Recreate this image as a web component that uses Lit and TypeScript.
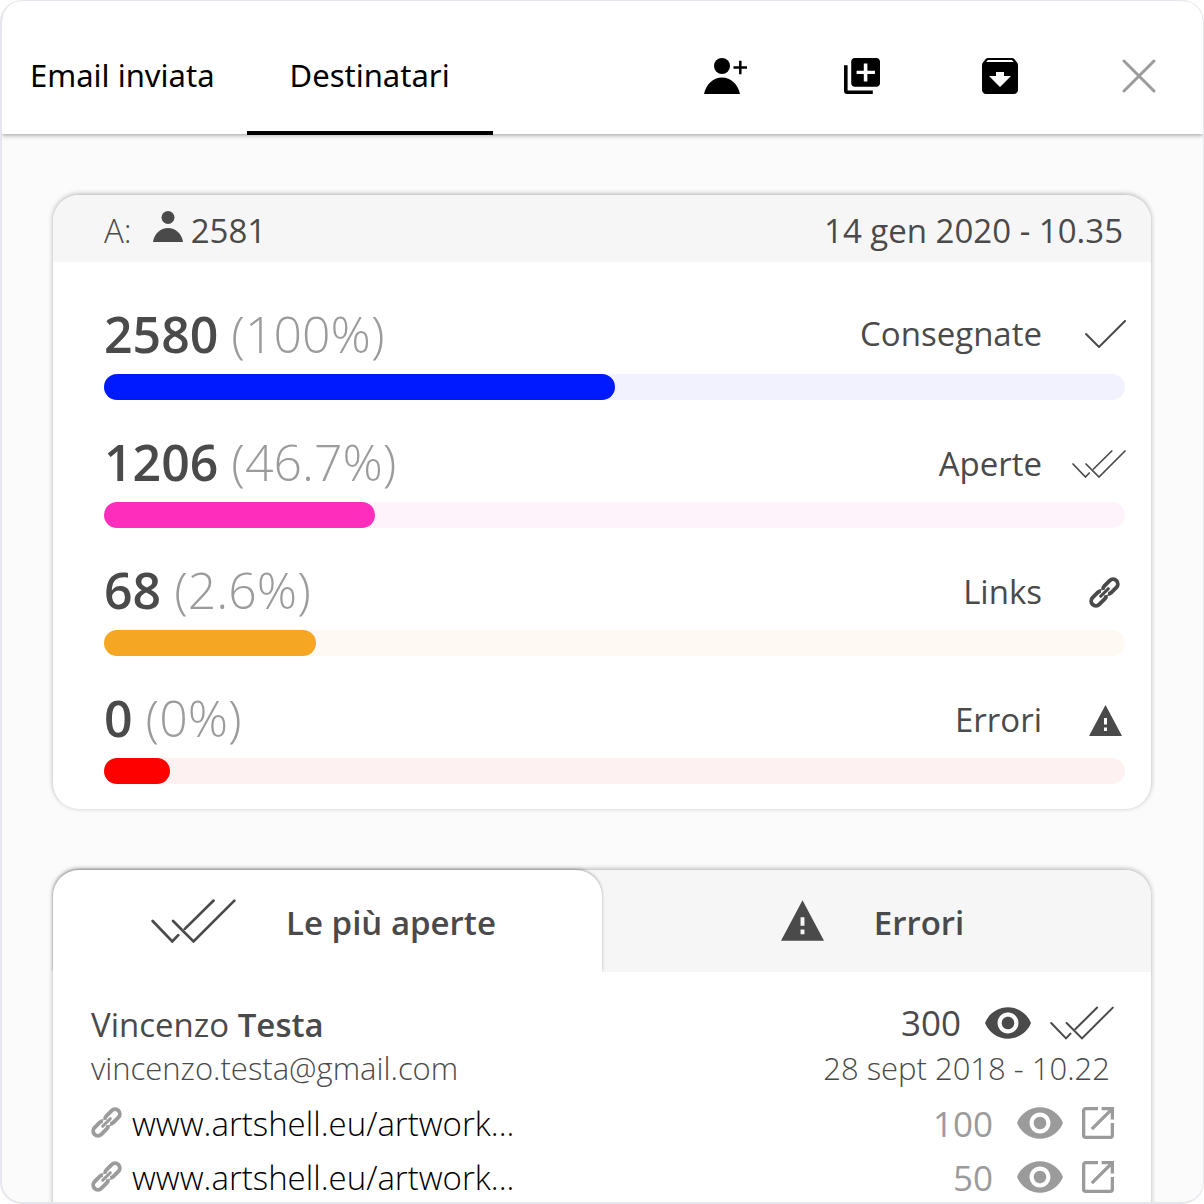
import { LitElement, html, css, svg } from "lit";
import { customElement, property } from "lit/decorators.js";

interface Stat {
  count: number;
  share: string;
  label: string;
  icon: string;
  tone: string;
  fill: number;
}

const STATS: Stat[] = [
  { count: 2580, share: "(100%)", label: "Consegnate", icon: "check", tone: "blue", fill: 50 },
  { count: 1206, share: "(46.7%)", label: "Aperte", icon: "double", tone: "pink", fill: 26.5 },
  { count: 68, share: "(2.6%)", label: "Links", icon: "link", tone: "amber", fill: 20.8 },
  { count: 0, share: "(0%)", label: "Errori", icon: "warning", tone: "red", fill: 6.5 },
];

const LINKS = [
  { url: "www.artshell.eu/artwork...", views: 100 },
  { url: "www.artshell.eu/artwork...", views: 50 },
];

const SHAPES: Record<string, { box: string; body: unknown }> = {
  "user-add": {
    box: "0 0 44 36",
    body: svg`<circle cx="18" cy="8" r="8"/><path d="M0 36C2 26.500 9 19.500 18 19.500S34 26.500 36 36z"/><path d="M29.500 9.500H43M36.300 2.800V16.300" fill="none" stroke="currentColor" stroke-width="2.500"/>`,
  },
  user: {
    box: "0 0 30 31",
    body: svg`<circle cx="15" cy="6.500" r="6.500"/><path d="M0 31C1 23 7.500 17 15 17S29 23 30 31z"/>`,
  },
  copy: {
    box: "2 2 20 20",
    body: svg`<path d="M4 6H2v14.500c0 .8.700 1.500 1.500 1.500H18v-2H4V6zM20 2H8C6.900 2 6 2.900 6 4v12c0 1.100.9 2 2 2h12c1.100 0 2-.9 2-2V4c0-1.100-.9-2-2-2zM19.200 10.900H15v4.200h-2v-4.200H9V9.100h4V5h2v4.100h4.200z"/>`,
  },
  archive: {
    box: "3 3 18 18",
    body: svg`<path d="M20.540 5.230l-1.390-1.680C18.880 3.210 18.470 3 18 3H6c-.47 0-.88.21-1.160.55L3.460 5.230C3.170 5.570 3 6.020 3 6.500V19c0 1.100.9 2 2 2h14c1.100 0 2-.9 2-2V6.500c0-.48-.17-.93-.46-1.270zM12 17.500L6.500 12H10v-2h4v2h3.500L12 17.500zM5.120 5l.81-1h12l.94 1H5.120z"/>`,
  },
  close: {
    box: "0 0 34 34",
    body: svg`<path d="M2 2L32 32M32 2L2 32" fill="none" stroke="currentColor" stroke-width="3" stroke-linecap="round"/>`,
  },
  check: {
    box: "0 0 41 28",
    body: svg`<path d="M1 14L14 27L40 1" fill="none" stroke="currentColor" stroke-width="2" stroke-linecap="round"/>`,
  },
  double: {
    box: "0 0 54 28",
    body: svg`<path d="M1 14L13.500 27L17.300 23M21.500 19L39.800 1M14 14L27 27L53 1" fill="none" stroke="currentColor" stroke-width="1.700" stroke-linecap="round"/>`,
  },
  warning: {
    box: "0 0 33 31",
    body: svg`<path fill-rule="evenodd" d="M16.500 0L33 31H0zM15 13V19.500H18V13zM15 22.500V26H18V22.500z"/>`,
  },
  link: {
    box: "0 0 32 32",
    body: svg`<g transform="rotate(-45 16 16)" fill="none" stroke="currentColor" stroke-width="4"><path d="M11.500 11.100H3.500a4.900 4.900 0 0 0 0 9.800H11.500Q14 20.900 15.200 18.900M16.800 13.100Q18 11.100 20.500 11.100H28.500a4.900 4.900 0 0 1 0 9.800H20.500M11.500 11.100Q13.400 11.200 14.500 12.300M20.500 20.900Q18.600 20.800 17.500 19.700"/><path d="M10.500 16H21.500" stroke-linecap="round" stroke-width="3.200"/></g>`,
  },
  eye: {
    box: "1 4.500 22 15",
    body: svg`<path d="M12 4.500C7 4.500 2.730 7.610 1 12c1.730 4.390 6 7.500 11 7.500s9.270-3.110 11-7.500c-1.730-4.390-6-7.500-11-7.500zM12 17c-2.760 0-5-2.240-5-5s2.240-5 5-5 5 2.240 5 5-2.240 5-5 5zm0-8c-1.660 0-3 1.340-3 3s1.340 3 3 3 3-1.340 3-3-1.340-3-3-3z"/>`,
  },
  open: {
    box: "0 0 31 31",
    body: svg`<path d="M15.500 1.600H3.600a2 2 0 0 0-2 2V27.400a2 2 0 0 0 2 2H27.400a2 2 0 0 0 2-2V15.500M19 1.600H29.400V12M29 2L9.500 21.500" fill="none" stroke="currentColor" stroke-width="3.200"/>`,
  },
};

@customElement("ui-icon")
export class UiIcon extends LitElement {
  @property() name = "";

  static styles = css`
    :host {
      display: block;
      flex: none;
    }
    .glyph {
      display: block;
      width: 100%;
      height: 100%;
      fill: currentColor;
    }
  `;

  render() {
    const shape = SHAPES[this.name];
    return shape
      ? html`<svg class="glyph" viewBox=${shape.box} aria-hidden="true">${shape.body}</svg>`
      : null;
  }
}

@customElement("app-root")
export class AppRoot extends LitElement {
  static styles = css`
    :host {
      display: block;
      background: #fff;
      color: #4a4a4a;
      font: 400 33px/48px "Open Sans", "Noto Sans", sans-serif;
    }
    * {
      box-sizing: border-box;
    }
    button {
      margin: 0;
      padding: 0;
      border: 0;
      background: none;
      color: inherit;
      font: inherit;
      cursor: pointer;
    }
    a {
      color: #000;
      text-decoration: none;
    }
    .frame {
      display: flex;
      flex-direction: column;
      height: 100vh;
      border: 1px solid #e6e6ee;
      border-width: 1px 1px 2px 2px;
      border-radius: 22px;
      overflow: hidden;
      background: #fbfbfb;
    }
    .top {
      display: flex;
      justify-content: space-between;
      flex: none;
      height: 133px;
      padding: 16px 47px 0 0;
      background: #fff;
      box-shadow: 0 1px 5px rgba(0, 0, 0, 0.4);
      z-index: 1;
    }
    .views {
      display: flex;
    }
    .view {
      padding: 2px 43px 0;
      border-bottom: 4px solid transparent;
      margin-bottom: -1px;
      color: #000;
      font: 400 31px/44px "Noto Sans", sans-serif;
    }
    .view:first-child {
      padding: 2px 32px 0 28px;
    }
    .view.on {
      border-bottom-color: #000;
    }
    .tools {
      display: flex;
      align-items: center;
      color: #000;
    }
    .tools button {
      display: flex;
    }
    .add {
      width: 44px;
      height: 36px;
      margin-right: 96px;
    }
    .square {
      width: 36px;
      height: 36px;
      margin-right: 102px;
    }
    .close {
      width: 34px;
      height: 34px;
      margin-left: 2px;
      color: #9b9b9b;
    }
    .body {
      display: flex;
      flex-direction: column;
      gap: 61px;
      flex: 1;
      min-height: 0;
      padding: 61px 52px 61px 51px;
      overflow-y: auto;
      scrollbar-width: none;
    }
    .card {
      flex: none;
      border-radius: 26px;
      background: #fff;
      box-shadow: 0 -1px 5px rgba(0, 0, 0, 0.3);
    }
    .meta {
      display: flex;
      align-items: center;
      height: 67px;
      padding: 4px 28px 0 51px;
      border-radius: 26px 26px 0 0;
      background: #f6f6f6;
    }
    .to {
      font-weight: 300;
    }
    .person {
      width: 30px;
      height: 31px;
      margin: 0 8px 8px 21px;
    }
    .when {
      margin-left: auto;
    }
    .stats {
      display: flex;
      flex-direction: column;
      gap: 26px;
      padding: 36px 26px 25px 51px;
    }
    .stat {
      display: flex;
      flex-direction: column;
      gap: 4px;
    }
    .line {
      display: flex;
      align-items: center;
      justify-content: space-between;
      height: 72px;
    }
    .num {
      font-size: 50px;
      line-height: 72px;
    }
    .num b {
      font-weight: 600;
    }
    .num span {
      color: #9b9b9b;
      font-weight: 300;
    }
    .kind {
      display: flex;
      align-items: center;
    }
    .stat + .stat .kind {
      padding-top: 4px;
    }
    .slot {
      display: flex;
      justify-content: flex-end;
      width: 84px;
      margin-right: -1px;
    }
    .slot .check {
      width: 41px;
      height: 28px;
    }
    .slot .double {
      width: 54px;
      height: 28px;
    }
    .slot .link {
      width: 31px;
      height: 31px;
      margin-right: 6px;
    }
    .slot .warning {
      width: 33px;
      height: 31px;
      margin-right: 4px;
    }
    .track {
      height: 26px;
      border-radius: 13px;
    }
    .fill {
      height: 26px;
      border-radius: 13px;
    }
    .track.blue {
      background: #f2f2ff;
    }
    .blue .fill {
      background: #001aff;
    }
    .track.pink {
      background: #fef3fb;
    }
    .pink .fill {
      background: #ff2dbb;
    }
    .track.amber {
      background: #fefaf3;
    }
    .amber .fill {
      background: #f5a623;
    }
    .track.red {
      background: #fef1f1;
    }
    .red .fill {
      background: #f00;
    }
    .tabs {
      display: flex;
      height: 102px;
      border-radius: 26px 26px 0 0;
      background: #f6f6f6;
    }
    .tab {
      display: flex;
      flex: 1;
      align-items: center;
      justify-content: center;
      gap: 50px;
      padding: 4px 8px 0 0;
      font-weight: 600;
    }
    .tab.on {
      border-radius: 26px 26px 0 0;
      background: #fff;
      box-shadow: 0 -1px 3px rgba(0, 0, 0, 0.3);
      clip-path: inset(-6px -6px 0 -6px);
    }
    .tab ui-icon {
      margin-bottom: 5px;
    }
    .tab .double {
      width: 85px;
      height: 44px;
    }
    .tab .warning {
      width: 43px;
      height: 41px;
    }
    .entry {
      padding: 31px 37px 30px 38px;
    }
    .row {
      display: flex;
      align-items: center;
      justify-content: space-between;
      height: 44px;
    }
    .row b {
      font-weight: 600;
    }
    .small {
      height: 42px;
      margin-bottom: 8px;
      padding-right: 4px;
      font-size: 31px;
      font-weight: 300;
    }
    .tally {
      display: flex;
      align-items: center;
    }
    .count {
      font-size: 35px;
    }
    .seen {
      padding-bottom: 4px;
    }
    .row .eye {
      width: 46px;
      height: 32px;
      margin: 0 19px 0 24px;
    }
    .row .double {
      width: 64px;
      height: 34px;
    }
    .url {
      height: 54px;
      color: #9b9b9b;
    }
    .url a {
      color: #000;
      font-weight: 300;
    }
    .row.url ui-icon {
      margin-bottom: 3px;
    }
    .url .link {
      width: 31px;
      height: 31px;
      margin-right: 10px;
    }
    .url .open {
      width: 32px;
      height: 32px;
    }
  `;

  private stat(s: Stat) {
    return html`
      <div class="stat">
        <div class="line">
          <div class="num"><b>${s.count}</b> <span>${s.share}</span></div>
          <div class="kind">
            ${s.label}
            <div class="slot"><ui-icon class=${s.icon} name=${s.icon}></ui-icon></div>
          </div>
        </div>
        <div class="track ${s.tone}"><div class="fill" style="width:${s.fill}%"></div></div>
      </div>
    `;
  }

  render() {
    return html`
      <div class="frame">
        <header class="top">
          <nav class="views">
            <button class="view">Email inviata</button>
            <button class="view on" aria-current="page">Destinatari</button>
          </nav>
          <div class="tools">
            <button aria-label="Aggiungi destinatario"><ui-icon class="add" name="user-add"></ui-icon></button>
            <button aria-label="Duplica"><ui-icon class="square" name="copy"></ui-icon></button>
            <button aria-label="Archivia"><ui-icon class="square" name="archive"></ui-icon></button>
            <button aria-label="Chiudi"><ui-icon class="close" name="close"></ui-icon></button>
          </div>
        </header>
        <main class="body">
          <section class="card">
            <div class="meta">
              <span class="to">A:</span>
              <ui-icon class="person" name="user"></ui-icon>
              <span>2581</span>
              <time class="when" datetime="2020-01-14T10:35">14 gen 2020 - 10.35</time>
            </div>
            <div class="stats">${STATS.map((s) => this.stat(s))}</div>
          </section>
          <section class="card">
            <div class="tabs" role="tablist">
              <button class="tab on" role="tab" aria-selected="true">
                <ui-icon class="double" name="double"></ui-icon>Le più aperte
              </button>
              <button class="tab" role="tab" aria-selected="false">
                <ui-icon class="warning" name="warning"></ui-icon>Errori
              </button>
            </div>
            <div class="entry">
              <div class="row">
                <span>Vincenzo <b>Testa</b></span>
                <span class="tally seen">
                  <span class="count">300</span><ui-icon class="eye" name="eye"></ui-icon><ui-icon class="double" name="double"></ui-icon>
                </span>
              </div>
              <div class="row small">
                <span>vincenzo.testa@gmail.com</span>
                <time datetime="2018-09-28T10:22">28 sept 2018 - 10.22</time>
              </div>
              ${LINKS.map(
                (l) => html`
                  <div class="row url">
                    <span class="tally">
                      <ui-icon class="link" name="link"></ui-icon><a href="#">${l.url}</a>
                    </span>
                    <span class="tally">
                      <span class="count">${l.views}</span><ui-icon class="eye" name="eye"></ui-icon><ui-icon class="open" name="open"></ui-icon>
                    </span>
                  </div>
                `
              )}
            </div>
          </section>
        </main>
      </div>
    `;
  }
}
